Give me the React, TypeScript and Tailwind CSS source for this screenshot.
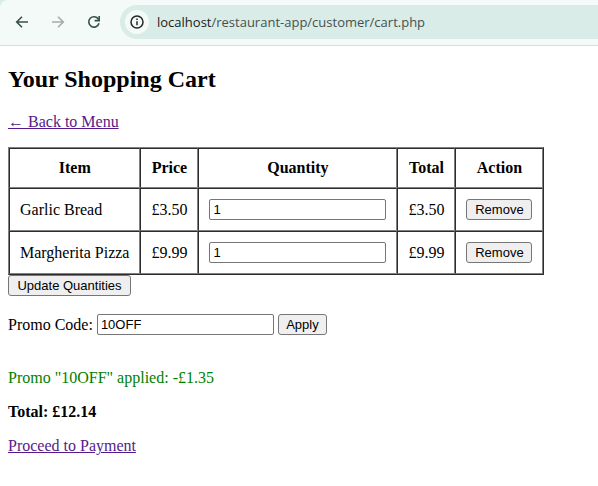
import { useState } from "react";

const items = [
  { name: "Garlic Bread", price: "£3.50", total: "£3.50" },
  { name: "Margherita Pizza", price: "£9.99", total: "£9.99" },
];

const cell =
  "border border-t-[#2c2c2c] border-l-[#2c2c2c] border-r-[#808080] border-b-[#808080] p-2.5";
const button =
  "h-[21px] rounded-[3px] border border-[#767676] bg-[#efefef] font-['Liberation_Sans',Arial,sans-serif] text-[13px] leading-[18px] whitespace-nowrap text-black";
const field =
  "h-[21px] w-[177px] rounded-[2px] border border-[#767676] bg-white px-[3px] font-['Liberation_Sans',Arial,sans-serif] text-[13px] leading-[18px] text-black";

function BrowserBar() {
  return (
    <div className="bg-[#d9ece7]">
      <header className="flex items-center rounded-tl-lg border-b border-[#d3e1dd] bg-[#f4faf8] pt-[5px] pb-1.5 pl-3.5">
        <button type="button" aria-label="Back" className="mr-5 text-[#36524b]">
          <svg width="16" height="16" viewBox="0 0 16 16" fill="none" stroke="currentColor" strokeWidth="1.6">
            <path d="M14 8H3M8 2.7 2.7 8 8 13.3" />
          </svg>
        </button>
        <button type="button" aria-label="Forward" className="mr-5 text-[#a3adaa]">
          <svg width="16" height="16" viewBox="0 0 16 16" fill="none" stroke="currentColor" strokeWidth="1.6">
            <path d="M2 8h11M8 2.7 13.3 8 8 13.3" />
          </svg>
        </button>
        <button type="button" aria-label="Reload" className="mr-[18px] text-[#36524b]">
          <svg width="16" height="16" viewBox="0 0 16 16" fill="none" stroke="currentColor" strokeWidth="1.6">
            <path d="M13 9.2A5.2 5.2 0 1 1 12.4 5.2L13.2 6.2" />
            <path d="M13.2 2v4.6H8.6" />
          </svg>
        </button>
        <div className="flex h-[34px] flex-1 items-center gap-2 rounded-l-full bg-[#d9ece7] pl-[5px]">
          <button
            type="button"
            aria-label="View site information"
            className="flex size-6 items-center justify-center rounded-full bg-[#f4faf8] text-[#222827]"
          >
            <svg width="14" height="14" viewBox="0 0 14 14" fill="none" stroke="currentColor" strokeWidth="1.5">
              <circle cx="7" cy="7" r="6" />
              <path d="M7 6.2v4M7 3.6v1.5" />
            </svg>
          </button>
          <span className="font-['Open_Sans','Noto_Sans',sans-serif] text-[13px] leading-[18px] text-[#46514e]">
            <span className="text-[#1b201f]">localhost</span>/restaurant-app/customer/cart.php
          </span>
        </div>
      </header>
    </div>
  );
}

export default function App() {
  const [quantities, setQuantities] = useState(["1", "1"]);
  const [promo, setPromo] = useState("10OFF");

  return (
    <div className="min-h-screen bg-white font-['Liberation_Serif','Times_New_Roman',serif] text-[16px] leading-[18px] text-black">
      <BrowserBar />
      <main className="px-2 pt-5 pb-8">
        <h2 className="text-[24px] leading-[27px] font-bold">Your Shopping Cart</h2>
        <p className="mt-5">
          <a href="#menu" className="text-[#551a8b] underline">← Back to Menu</a>
        </p>

        <form className="mt-4 flex flex-col items-start" onSubmit={(e) => e.preventDefault()}>
          <table className="border-separate border-spacing-0 border border-t-[#808080] border-r-[#2c2c2c] border-b-[#2c2c2c] border-l-[#808080]">
            <thead>
              <tr>
                {["Item", "Price", "Quantity", "Total", "Action"].map((title) => (
                  <th key={title} scope="col" className={cell}>{title}</th>
                ))}
              </tr>
            </thead>
            <tbody>
              {items.map((item, i) => (
                <tr key={item.name}>
                  <td className={cell}>{item.name}</td>
                  <td className={cell}>{item.price}</td>
                  <td className={cell}>
                    <input
                      type="text"
                      inputMode="numeric"
                      aria-label={`Quantity of ${item.name}`}
                      value={quantities[i]}
                      onChange={(e) =>
                        setQuantities(quantities.map((q, n) => (n === i ? e.target.value : q)))
                      }
                      className={`block ${field}`}
                    />
                  </td>
                  <td className={cell}>{item.total}</td>
                  <td className={cell}>
                    <button type="button" className={`block w-[66px] ${button}`}>Remove</button>
                  </td>
                </tr>
              ))}
            </tbody>
          </table>
          <button type="submit" className={`w-[123px] ${button}`}>Update Quantities</button>
        </form>

        <form className="mt-[18px] flex items-center gap-1" onSubmit={(e) => e.preventDefault()}>
          <label htmlFor="promo">Promo Code:</label>
          <input
            id="promo"
            type="text"
            value={promo}
            onChange={(e) => setPromo(e.target.value)}
            className={field}
          />
          <button type="submit" className={`w-[49px] ${button}`}>Apply</button>
        </form>

        <p className="mt-[34px] text-[#008000]">Promo "10OFF" applied: -£1.35</p>
        <p className="mt-4 font-bold">Total: £12.14</p>
        <p className="mt-4">
          <a href="#payment" className="text-[#551a8b] underline">Proceed to Payment</a>
        </p>
      </main>
    </div>
  );
}
